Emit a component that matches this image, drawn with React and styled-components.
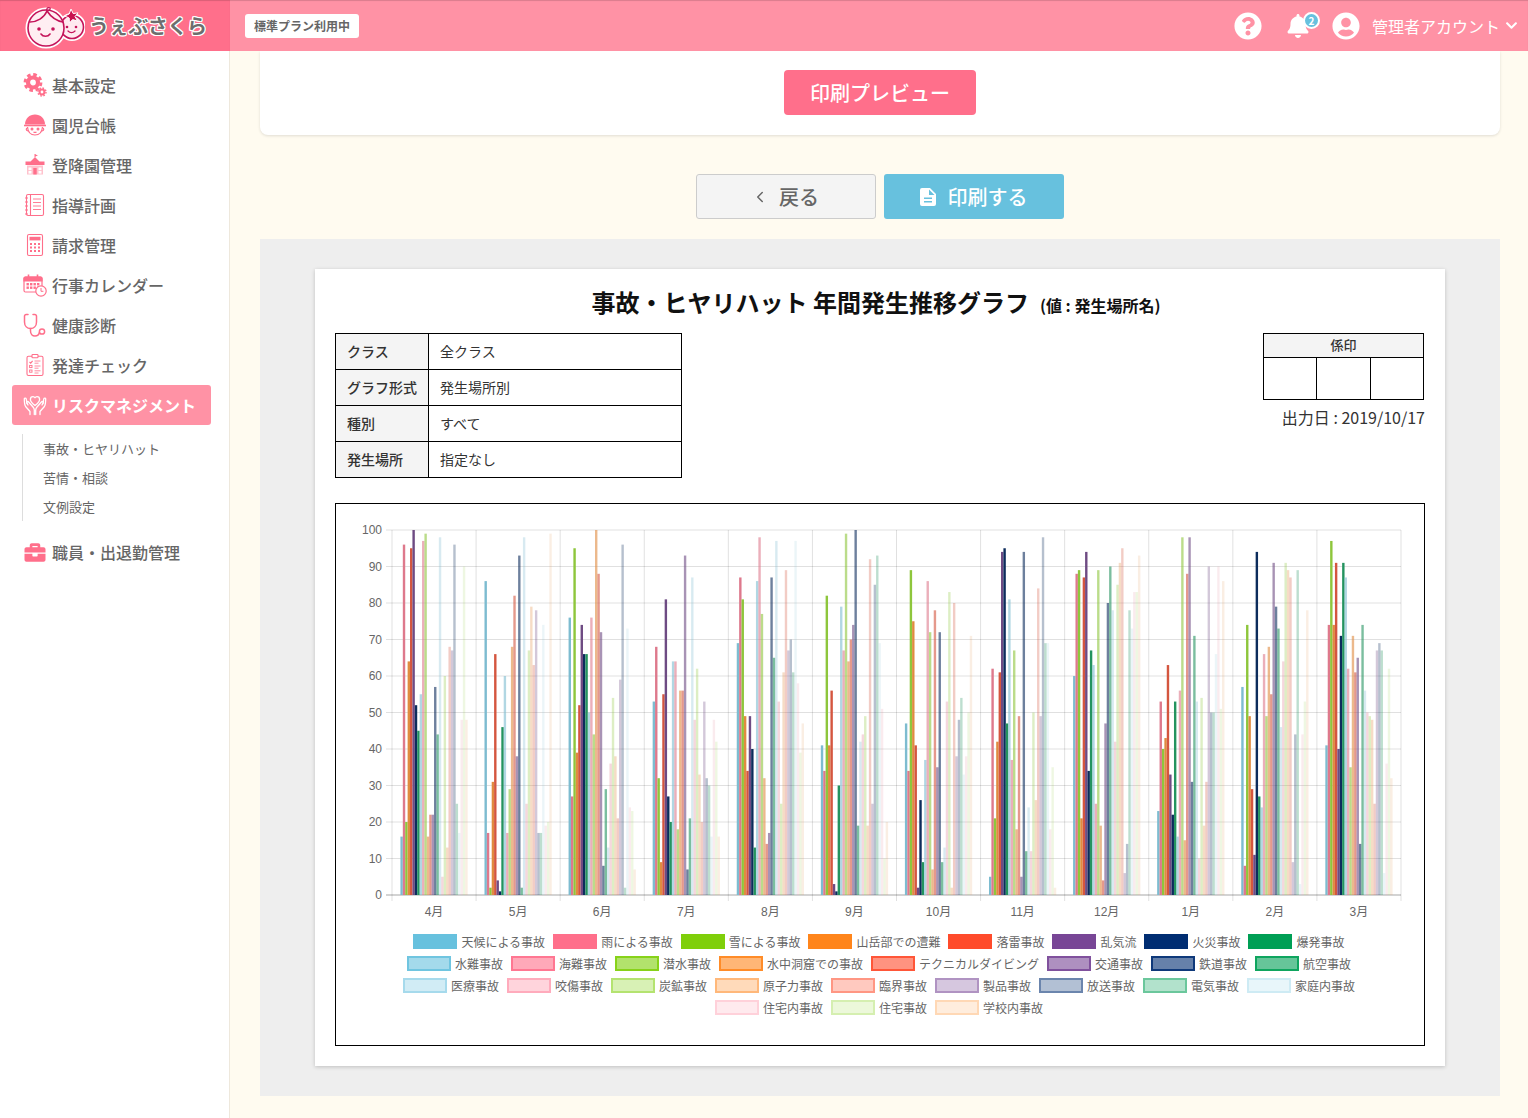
import React from 'react';
import styled, {createGlobalStyle} from 'styled-components';
import {FaQuestionCircle, FaBell, FaUserCircle, FaChevronDown, FaBriefcase} from 'react-icons/fa';
import {ChevronLeft} from 'lucide-react';

const PINK = '#FF6F8B';
const PINK_LIGHT = '#FF92A5';
const BLUE = '#67C1DE';

const GlobalStyle = createGlobalStyle`
    html, body {
        margin: 0;
        padding: 0;
        background: #fffbf0;
        font-family: "Noto Sans CJK JP", "Noto Sans", sans-serif;
        color: #333;
    }
    * {
        box-sizing: border-box;
    }
`;

// 데이터 : one array per month, 28 values in legend order
const MONTHS = ['4月', '5月', '6月', '7月', '8月', '9月', '10月', '11月', '12月', '1月', '2月', '3月'];
const VALUES = [
    [16,96,20,64,95,100,52,45,55,97,99,16,22,22,57,44,98,5,60,13,68,67,96,25,17,48,90,48],
    [86,17,2,31,66,4,1,46,60,17,29,68,82,38,93,2,98,25,67,79,63,78,17,17,74,19,20,99],
    [76,27,95,39,52,74,66,66,50,76,44,100,88,72,8,29,13,36,54,38,21,59,96,2,73,24,23,7],
    [53,68,32,9,55,81,27,20,64,64,18,56,56,93,7,21,87,48,62,33,20,53,32,30,16,48,42,16],
    [69,87,81,49,34,49,40,13,86,98,77,32,14,17,87,65,97,53,25,61,89,67,70,61,97,58,39,47],
    [41,34,82,41,56,3,1,30,79,67,99,64,70,74,100,19,42,44,49,19,92,25,85,93,69,51,10,20],
    [47,34,89,75,41,2,26,9,37,86,72,7,78,35,72,9,13,53,83,2,80,38,48,54,33,38,50,71],
    [5,62,21,42,61,94,95,47,81,37,67,18,49,5,94,12,24,12,50,26,84,49,98,69,69,18,35,2],
    [60,88,89,21,87,94,34,67,63,25,89,19,4,47,80,90,78,42,85,91,95,6,14,78,73,83,83,93],
    [23,53,40,43,63,33,22,53,16,56,98,15,88,98,31,71,53,10,54,19,31,90,50,50,66,90,51,86],
    [57,8,74,49,29,11,94,27,24,66,49,68,55,91,79,73,46,64,91,89,87,9,44,89,3,44,53,78],
    [41,74,97,74,91,40,71,91,87,62,35,71,61,65,14,74,56,50,49,48,25,67,69,67,6,36,62,32],
];

const BASE = {
    blue: '103,193,222',
    pink: '255,111,139',
    green: '127,207,10',
    orange: '255,133,27',
    red: '255,75,43',
    purple: '120,70,150',
    navy: '0,45,114',
    teal: '0,159,85',
};

const TIERS = [
    {fill: 1, border: 0.5},
    {fill: 0.6, border: 0.85},
    {fill: 0.3, border: 0.4},
    {fill: 0.15, border: 0.2},
];

const LEGEND_ROWS = [
    [
        ['天候による事故', 'blue', 0], ['雨による事故', 'pink', 0], ['雪による事故', 'green', 0], ['山岳部での遭難', 'orange', 0],
        ['落雷事故', 'red', 0], ['乱気流', 'purple', 0], ['火災事故', 'navy', 0], ['爆発事故', 'teal', 0],
    ],
    [
        ['水難事故', 'blue', 1], ['海難事故', 'pink', 1], ['潜水事故', 'green', 1], ['水中洞窟での事故', 'orange', 1],
        ['テクニカルダイビング', 'red', 1], ['交通事故', 'purple', 1], ['鉄道事故', 'navy', 1], ['航空事故', 'teal', 1],
    ],
    [
        ['医療事故', 'blue', 2], ['咬傷事故', 'pink', 2], ['炭鉱事故', 'green', 2], ['原子力事故', 'orange', 2],
        ['臨界事故', 'red', 2], ['製品事故', 'purple', 2], ['放送事故', 'navy', 2], ['電気事故', 'teal', 2],
        ['家庭内事故', 'blue', 3],
    ],
    [
        ['住宅内事故', 'pink', 3], ['住宅事故', 'green', 3], ['学校内事故', 'orange', 3],
    ],
];
const SERIES = LEGEND_ROWS.flat();

const MENU = [
    {label: '基本設定', Icon: () => <GearIcon />},
    {label: '園児台帳', Icon: () => <ChildIcon />},
    {label: '登降園管理', Icon: () => <SchoolIcon />},
    {label: '指導計画', Icon: () => <NotebookIcon />},
    {label: '請求管理', Icon: () => <CalculatorIcon />},
    {label: '行事カレンダー', Icon: () => <CalendarIcon />},
    {label: '健康診断', Icon: () => <StethoscopeIcon />},
    {label: '発達チェック', Icon: () => <ClipboardIcon />},
];

const Frame = styled.div`
    width: 100%;
    height: 1118px;
    overflow: hidden;
    display: flex;
    flex-direction: column;
    background: #fffbf0;
`;

const Header = styled.header`
    height: 51px;
    flex: none;
    display: flex;
    align-items: center;
    background: ${PINK_LIGHT};
    box-shadow: inset 0 1px 1px rgba(0, 0, 0, 0.15);
    position: relative;
    z-index: 2;
`;

const LogoBox = styled.div`
    width: 230px;
    height: 100%;
    flex: none;
    display: flex;
    align-items: center;
    gap: 4px;
    padding-left: 24px;
    background: ${PINK};
    box-shadow: inset 0 1px 1px rgba(0, 0, 0, 0.15);
`;

const LogoText = styled.span`
    font-size: 20px;
    font-weight: 700;
    letter-spacing: -0.4px;
    color: #6e6e6e;
    text-shadow: 1px 0 0 #fff, -1px 0 0 #fff, 0 1px 0 #fff, 0 -1px 0 #fff,
        1px 1px 0 #fff, -1px -1px 0 #fff, 1px -1px 0 #fff, -1px 1px 0 #fff;
`;

const PlanBadge = styled.div`
    margin-left: 15px;
    height: 24px;
    padding: 0 9px;
    display: flex;
    align-items: center;
    background: #fff;
    border-radius: 3px;
    font-size: 12px;
    font-weight: 700;
    color: #666;
`;

const HeaderRight = styled.div`
    margin-left: auto;
    display: flex;
    align-items: center;
    color: #fff;
    padding-right: 10px;
`;

const HelpIcon = styled(FaQuestionCircle)`
    font-size: 28px;
    display: block;
`;

const BellBox = styled.div`
    position: relative;
    margin-left: 24px;
    width: 24px;
    height: 28px;
    display: flex;
    align-items: center;
    font-size: 24px;
`;

const BellBadge = styled.span`
    position: absolute;
    left: 17px;
    top: 0;
    width: 17px;
    height: 17px;
    border-radius: 50%;
    background: ${BLUE};
    border: 2px solid #fff;
    color: #fff;
    font-size: 10px;
    font-weight: 700;
    line-height: 13px;
    text-align: center;
`;

const UserIcon = styled(FaUserCircle)`
    margin-left: 22px;
    font-size: 28px;
    display: block;
`;

const AccountName = styled.span`
    margin-left: 12px;
    font-size: 16px;
`;

const AccountArrow = styled(FaChevronDown)`
    margin-left: 5px;
    font-size: 13px;
`;

const Body = styled.div`
    flex: 1;
    display: flex;
    min-height: 0;
`;

const Sidebar = styled.nav`
    width: 230px;
    flex: none;
    padding: 14px 18px 0 12px;
    background: #fff;
    border-right: 1px solid #eee8dc;
`;

const MenuItem = styled.div`
    height: 40px;
    display: flex;
    align-items: center;
    gap: 5px;
    padding-left: 11px;
    border-radius: 3px;
    font-size: 16px;
    font-weight: ${(p) => (p.$active ? 700 : 500)};
    color: ${(p) => (p.$active ? '#fff' : '#666')};
    background: ${(p) => (p.$active ? PINK_LIGHT : 'transparent')};
    svg {
        flex: none;
    }
`;

const SubMenu = styled.ul`
    list-style: none;
    margin: 9px 0 11px 10px;
    padding: 0 0 0 20px;
    border-left: 1px solid #ddd;
`;

const SubItem = styled.li`
    height: 29px;
    display: flex;
    align-items: center;
    font-size: 13px;
    color: #666;
`;

const BriefcaseIcon = styled(FaBriefcase)`
    width: 24px;
    height: 21px;
    color: ${PINK};
`;

const Main = styled.main`
    flex: 1;
    min-width: 0;
    padding: 0 28px 0 30px;
`;

const TopCard = styled.section`
    display: flex;
    justify-content: center;
    padding: 19px 0 20px;
    background: #fff;
    border-radius: 0 0 8px 8px;
    box-shadow: 0 1px 3px rgba(0, 0, 0, 0.12);
`;

const PreviewButton = styled.button`
    width: 192px;
    height: 45px;
    border: none;
    border-radius: 4px;
    background: ${PINK};
    color: #fff;
    font: 500 20px "Noto Sans CJK JP", sans-serif;
`;

const ButtonRow = styled.div`
    display: flex;
    justify-content: center;
    gap: 8px;
    margin: 39px 0 20px;
`;

const ActionButton = styled.button`
    width: 180px;
    height: 45px;
    display: flex;
    align-items: center;
    justify-content: center;
    gap: ${(p) => (p.$primary ? '11px' : '10px')};
    padding: ${(p) => (p.$primary ? '0 2px 0 0' : '0 2px 0 0')};
    border: ${(p) => (p.$primary ? 'none' : '1px solid #ccc')};
    border-radius: 3px;
    background: ${(p) => (p.$primary ? BLUE : '#f4f4f4')};
    color: ${(p) => (p.$primary ? '#fff' : '#666')};
    font: 500 20px "Noto Sans CJK JP", sans-serif;
`;

const PrintPanel = styled.section`
    padding: 30px 55px;
    background: #eee;
`;

const Sheet = styled.article`
    height: 797px;
    padding: 17px 20px 0;
    background: #fff;
    box-shadow: 0 1px 4px rgba(0, 0, 0, 0.2);
`;

const SheetTitle = styled.h1`
    margin: 0 0 15px;
    padding-right: 8px;
    height: 32px;
    line-height: 32px;
    text-align: center;
    font-size: 24px;
    font-weight: 700;
    color: #111;
    small {
        margin-left: 11px;
        font-size: 16px;
    }
`;

const InfoRow = styled.div`
    display: flex;
    justify-content: space-between;
    align-items: flex-start;
    margin-bottom: 25px;
`;

const InfoTable = styled.table`
    width: 347px;
    border-collapse: collapse;
    font-size: 14px;
    color: #333;
    th, td {
        height: 36px;
        padding: 0 11px 2px;
        border: 1px solid #000;
        text-align: left;
        white-space: nowrap;
    }
    th {
        width: 91px;
        background: #f4f4f4;
        font-weight: 500;
    }
    td {
        font-weight: 400;
    }
`;

const StampBox = styled.div`
    width: 162px;
`;

const StampTable = styled.table`
    width: 161px;
    border-collapse: collapse;
    table-layout: fixed;
    th, td {
        border: 1px solid #000;
    }
    th {
        height: 24px;
        padding: 0 0 2px;
        background: #f4f4f4;
        font-size: 13px;
        font-weight: 500;
        color: #333;
    }
    td {
        height: 42px;
    }
`;

const OutputDate = styled.p`
    margin: 6px 0 0;
    text-align: right;
    font-size: 16px;
    line-height: 22px;
    color: #333;
    white-space: nowrap;
`;

const ChartBox = styled.figure`
    margin: 0;
    height: 543px;
    border: 1px solid #000;
`;

const ChartSvg = styled.svg`
    display: block;
    width: 1088px;
    height: 426px;
    text {
        font-family: "Liberation Sans", "Noto Sans CJK JP", sans-serif;
        font-size: 12px;
        fill: #666;
    }
`;

// thin bars read duller than the flat legend swatches
const Bars = styled.g`
    filter: saturate(0.7);
`;

const Legend = styled.div`
    display: flex;
    flex-direction: column;
    padding-right: 2px;
`;

const LegendRow = styled.div`
    height: 22px;
    display: flex;
    justify-content: center;
    align-items: center;
    gap: 8px;
`;

const LegendItem = styled.div`
    display: flex;
    align-items: center;
    gap: 4px;
    font-family: "Liberation Sans", "Noto Sans CJK JP", sans-serif;
    font-size: 12px;
    color: #666;
`;

const Swatch = styled.span`
    width: 44px;
    height: 15px;
    background: ${(p) => p.$fill};
    border: 2px solid ${(p) => p.$border};
`;

// sidebar icons
const GearIcon = () => (
    <svg width="24" height="24" viewBox="0 0 24 24" fill="none" stroke={PINK}>
        <circle cx="10" cy="9.5" r="5" strokeWidth="4.2" />
        <circle cx="10" cy="9.5" r="8" strokeWidth="2.8" strokeDasharray="3.6 2.68" />
        <circle cx="19" cy="19" r="2.4" strokeWidth="2" />
        <circle cx="19" cy="19" r="4" strokeWidth="1.4" strokeDasharray="1.6 1.54" />
    </svg>
);

const ChildIcon = () => (
    <svg width="24" height="24" viewBox="0 0 24 24" fill="none" stroke={PINK} strokeWidth="1.2">
        <path d="M2 11.5C2 5.5 6.5 1.5 12 1.5S22 5.5 22 11.5Z" fill={PINK} stroke="none" />
        <path d="M1 12.5H23" strokeWidth="1.6" />
        <path d="M4.5 14C5 19.5 8 22 12 22S19 19.5 19.5 14" />
        <path d="M4.5 15C3 15 2.5 17.5 5 18M19.5 15C21 15 21.5 17.5 19 18" />
        <circle cx="9" cy="16" r="0.9" fill={PINK} />
        <circle cx="15" cy="16" r="0.9" fill={PINK} />
        <path d="M10.5 19C11.5 19.6 12.5 19.6 13.5 19" />
    </svg>
);

const SchoolIcon = () => (
    <svg width="24" height="24" viewBox="0 0 24 24" fill="none">
        <path d="M12 1V4" stroke={PINK} />
        <path d="M12 1.2L15 2.4L12 3.6Z" fill={PINK} />
        <path d="M12 4L16.5 8.5H21.5V12H2.5V8.5H7.5Z" fill={PINK} />
        <path d="M4 12.5H20V21.5H4Z" fill="#ffc2cd" />
        <rect x="10.3" y="15" width="3.4" height="6.5" fill={PINK} />
        <rect x="5.5" y="14.5" width="3" height="2.6" fill="#fff" />
        <rect x="15.5" y="14.5" width="3" height="2.6" fill="#fff" />
        <rect x="5.5" y="18" width="3" height="2.6" fill="#fff" />
        <rect x="15.5" y="18" width="3" height="2.6" fill="#fff" />
    </svg>
);

const NotebookIcon = () => (
    <svg width="24" height="24" viewBox="0 0 24 24" fill="none" stroke={PINK} strokeWidth="1.1">
        <rect x="3.5" y="1.5" width="17" height="21" rx="1.5" />
        <path d="M7.5 1.5V22.5" />
        <path d="M10 6H18M10 9.5H18M10 13H18M10 16.5H18" strokeWidth="0.9" />
        <path d="M2 5H5M2 9H5M2 13H5M2 17H5M2 21H5" strokeWidth="1" />
    </svg>
);

const CalculatorIcon = () => (
    <svg width="24" height="24" viewBox="0 0 24 24" fill="none" stroke={PINK} strokeWidth="1.1">
        <rect x="4.5" y="1.5" width="15" height="21" rx="1.5" />
        <rect x="6.5" y="3.8" width="11" height="3.6" fill={PINK} stroke="none" />
        <g fill={PINK} stroke="none">
            {[10, 13.5, 17].map((y) =>
                [7, 11, 15].map((x) => <rect key={`${x}-${y}`} x={x} y={y} width="2" height="2" />)
            )}
        </g>
    </svg>
);

const CalendarIcon = () => (
    <svg width="24" height="24" viewBox="0 0 24 24" fill="none" stroke={PINK} strokeWidth="1.2">
        <rect x="1" y="4" width="18" height="15" rx="1.5" />
        <path d="M1 5.5A1.5 1.5 0 0 1 2.5 4H17.5A1.5 1.5 0 0 1 19 5.5V8H1Z" fill={PINK} />
        <path d="M5.5 1.5V5M14.5 1.5V5" strokeWidth="1.6" />
        <g fill={PINK} stroke="none">
            {[10, 13.5].map((y) =>
                [3.5, 7, 10.5, 14].map((x) => <rect key={`${x}-${y}`} x={x} y={y} width="2.4" height="2.4" />)
            )}
        </g>
        <circle cx="18" cy="18" r="5.2" fill="#fff" />
        <path d="M18 15V18.3H20.4" strokeWidth="1" />
    </svg>
);

const StethoscopeIcon = () => (
    <svg width="24" height="24" viewBox="0 0 24 24" fill="none" stroke={PINK} strokeWidth="1.5" strokeLinecap="round">
        <path d="M5 1.5H3.2C2.2 1.5 1.5 2.2 1.5 3.2V9C1.5 13 4.2 15.5 7.5 15.5C10.8 15.5 13.5 13 13.5 9V3.2C13.5 2.2 12.8 1.5 11.8 1.5H10" />
        <path d="M7.5 15.5V18C7.5 21 9.5 23 12 23C14.5 23 16 21.5 16.4 19.5" />
        <circle cx="19" cy="18.5" r="2.6" />
    </svg>
);

const ClipboardIcon = () => (
    <svg width="24" height="24" viewBox="0 0 24 24" fill="none" stroke={PINK} strokeWidth="1.1">
        <rect x="4" y="3.2" width="16" height="19.3" rx="1.5" />
        <rect x="9" y="1.5" width="6" height="3.2" rx="0.8" fill="#fff" />
        <path d="M6.5 9L7.7 10.2L9.6 7.8" />
        <rect x="6.6" y="12.4" width="2.4" height="2.2" strokeWidth="0.9" />
        <rect x="6.6" y="17" width="2.4" height="2.2" strokeWidth="0.9" />
        <path d="M11.5 8H17.5M11.5 10.2H15.5M11.5 13H17.5M11.5 15.2H15.5M11.5 17.8H17.5M11.5 20H15.5" strokeWidth="0.8" />
    </svg>
);

const HandsHeartIcon = () => (
    <svg width="24" height="24" viewBox="0 0 24 24" fill="none" stroke="#fff" strokeWidth="1.3" strokeLinejoin="round" strokeLinecap="round">
        <path d="M12 12.5C9 10.2 7.4 8.6 7.4 6.4C7.4 4.6 8.7 3.6 10 3.6C10.9 3.6 11.6 4.1 12 4.8C12.4 4.1 13.1 3.6 14 3.6C15.3 3.6 16.6 4.6 16.6 6.4C16.6 8.6 15 10.2 12 12.5Z" />
        <path d="M7 21.5V18.5L2.6 13.5C2 12.6 1.3 8.5 1.3 5.8C1.3 4.8 3 4.8 3.2 5.8L4 10.5" />
        <path d="M5 12L3.8 9.8C3.3 8.8 4.8 8 5.6 9L10 14C11 15.2 11.3 16 11.3 17V21.5" />
        <path d="M17 21.5V18.5L21.4 13.5C22 12.6 22.7 8.5 22.7 5.8C22.7 4.8 21 4.8 20.8 5.8L20 10.5" />
        <path d="M19 12L20.2 9.8C20.7 8.8 19.2 8 18.4 9L14 14C13 15.2 12.7 16 12.7 17V21.5" />
    </svg>
);

const DocumentIcon = () => (
    <svg width="18" height="18" viewBox="0 0 18 18">
        <path
            fillRule="evenodd"
            fill="currentColor"
            d="M2 0H11L17 6V16A2 2 0 0 1 15 18H3A2 2 0 0 1 1 16V2A2 2 0 0 1 3 0ZM10 1.5V7H15.5ZM5 9.5V11H13V9.5ZM5 13V14.5H13V13Z"
        />
    </svg>
);

const LogoIcon = () => (
    <svg width="61" height="46" viewBox="0 0 61 46">
        <circle cx="48" cy="24" r="12.5" fill="#fff" stroke="#fff" strokeWidth="3" />
        <circle cx="22" cy="25" r="18.5" fill="#fff" stroke="#fff" strokeWidth="4" />
        <g fill="none" stroke="#c4145a" strokeWidth="1.6" strokeLinecap="round">
            <circle cx="48" cy="24" r="11.5" fill="#ffe9ef" />
            <circle cx="22" cy="25" r="18" fill="#ffeef2" />
            <path d="M6 19C13 19 20 15 23 8C27 14 33 18 39 19" />
            <path d="M23 8C22 5 24 4 26 5C27 6 25 8 23 8" strokeWidth="1.2" />
            <path d="M17 31C19 34 24 34 26 31" />
            <path d="M44 28C46 30 49 30 51 28" strokeWidth="1.3" />
        </g>
        <circle cx="15" cy="26" r="1.8" fill="#c4145a" />
        <circle cx="29" cy="26" r="1.8" fill="#c4145a" />
        <circle cx="43" cy="24" r="1.3" fill="#c4145a" />
        <circle cx="52" cy="24" r="1.3" fill="#c4145a" />
        <path d="M47 6L49.2 10.6L54 9.8L51 13.6L53.6 18L48.6 16.6L45.4 20L45.2 15L40.6 13L45.2 11Z" fill="#c9114f" stroke="#fff" strokeWidth="1" />
    </svg>
);

// chart geometry, in px inside the svg
const PLOT = {left: 56, right: 1065, top: 26, bottom: 391};
const GROUP_W = (PLOT.right - PLOT.left) / 12;
const BAR_STEP = (GROUP_W * 0.8) / 28;
const BAR_W = 2.4;
const yOf = (v) => PLOT.bottom - ((PLOT.bottom - PLOT.top) * v) / 100;

const IncidentChart = () => {
    const ticks = [0, 10, 20, 30, 40, 50, 60, 70, 80, 90, 100];
    const edges = Array.from({length: 13}, (_, i) => PLOT.left + GROUP_W * i);

    return (
        <ChartSvg viewBox="0 0 1088 426">
            {ticks.map((t) => (
                <g key={t}>
                    <line
                        x1={PLOT.left - 6}
                        x2={PLOT.right}
                        y1={yOf(t)}
                        y2={yOf(t)}
                        stroke={t === 0 ? 'rgba(0,0,0,0.35)' : 'rgba(0,0,0,0.12)'}
                    />
                    <text x={PLOT.left - 10} y={yOf(t) + 4} textAnchor="end">{t}</text>
                </g>
            ))}
            {edges.map((x) => (
                <line key={x} x1={x} x2={x} y1={PLOT.top} y2={PLOT.bottom + 6} stroke="rgba(0,0,0,0.12)" />
            ))}
            <Bars>
                {VALUES.map((row, m) =>
                    row.map((v, i) => {
                        const [, color, tier] = SERIES[i];
                        const x = PLOT.left + GROUP_W * m + GROUP_W * 0.1 + BAR_STEP * i;
                        return (
                            <rect
                                key={`${m}-${i}`}
                                x={x}
                                y={yOf(v)}
                                width={BAR_W}
                                height={PLOT.bottom - yOf(v)}
                                fill={`rgba(${BASE[color]},${TIERS[tier].fill})`}
                            />
                        );
                    })
                )}
            </Bars>
            {MONTHS.map((label, m) => (
                <text key={label} x={PLOT.left + GROUP_W * (m + 0.5)} y={PLOT.bottom + 21} textAnchor="middle">
                    {label}
                </text>
            ))}
        </ChartSvg>
    );
};

const App = () => {
    return (
        <Frame>
            <GlobalStyle />
            <Header>
                <LogoBox>
                    <LogoIcon />
                    <LogoText>うぇぶさくら</LogoText>
                </LogoBox>
                <PlanBadge>標準プラン利用中</PlanBadge>
                <HeaderRight>
                    <HelpIcon />
                    <BellBox>
                        <FaBell />
                        <BellBadge>2</BellBadge>
                    </BellBox>
                    <UserIcon />
                    <AccountName>管理者アカウント</AccountName>
                    <AccountArrow />
                </HeaderRight>
            </Header>
            <Body>
                <Sidebar>
                    {MENU.map(({label, Icon}) => (
                        <MenuItem key={label}>
                            <Icon />
                            {label}
                        </MenuItem>
                    ))}
                    <MenuItem $active>
                        <HandsHeartIcon />
                        リスクマネジメント
                    </MenuItem>
                    <SubMenu>
                        <SubItem>事故・ヒヤリハット</SubItem>
                        <SubItem>苦情・相談</SubItem>
                        <SubItem>文例設定</SubItem>
                    </SubMenu>
                    <MenuItem>
                        <BriefcaseIcon />
                        職員・出退勤管理
                    </MenuItem>
                </Sidebar>
                <Main>
                    <TopCard>
                        <PreviewButton>印刷プレビュー</PreviewButton>
                    </TopCard>
                    <ButtonRow>
                        <ActionButton>
                            <ChevronLeft size={18} />
                            戻る
                        </ActionButton>
                        <ActionButton $primary>
                            <DocumentIcon />
                            印刷する
                        </ActionButton>
                    </ButtonRow>
                    <PrintPanel>
                        <Sheet>
                            <SheetTitle>
                                事故・ヒヤリハット 年間発生推移グラフ
                                <small>(値 : 発生場所名)</small>
                            </SheetTitle>
                            <InfoRow>
                                <InfoTable>
                                    <tbody>
                                        <tr><th>クラス</th><td>全クラス</td></tr>
                                        <tr><th>グラフ形式</th><td>発生場所別</td></tr>
                                        <tr><th>種別</th><td>すべて</td></tr>
                                        <tr><th>発生場所</th><td>指定なし</td></tr>
                                    </tbody>
                                </InfoTable>
                                <StampBox>
                                    <StampTable>
                                        <thead>
                                            <tr><th colSpan="3">係印</th></tr>
                                        </thead>
                                        <tbody>
                                            <tr><td /><td /><td /></tr>
                                        </tbody>
                                    </StampTable>
                                    <OutputDate>出力日 : 2019/10/17</OutputDate>
                                </StampBox>
                            </InfoRow>
                            <ChartBox>
                                <IncidentChart />
                                <Legend>
                                    {LEGEND_ROWS.map((row, r) => (
                                        <LegendRow key={r}>
                                            {row.map(([label, color, tier]) => (
                                                <LegendItem key={label}>
                                                    <Swatch
                                                        $fill={`rgba(${BASE[color]},${TIERS[tier].fill})`}
                                                        $border={`rgba(${BASE[color]},${TIERS[tier].border})`}
                                                    />
                                                    {label}
                                                </LegendItem>
                                            ))}
                                        </LegendRow>
                                    ))}
                                </Legend>
                            </ChartBox>
                        </Sheet>
                    </PrintPanel>
                </Main>
            </Body>
        </Frame>
    );
};

export default App;
